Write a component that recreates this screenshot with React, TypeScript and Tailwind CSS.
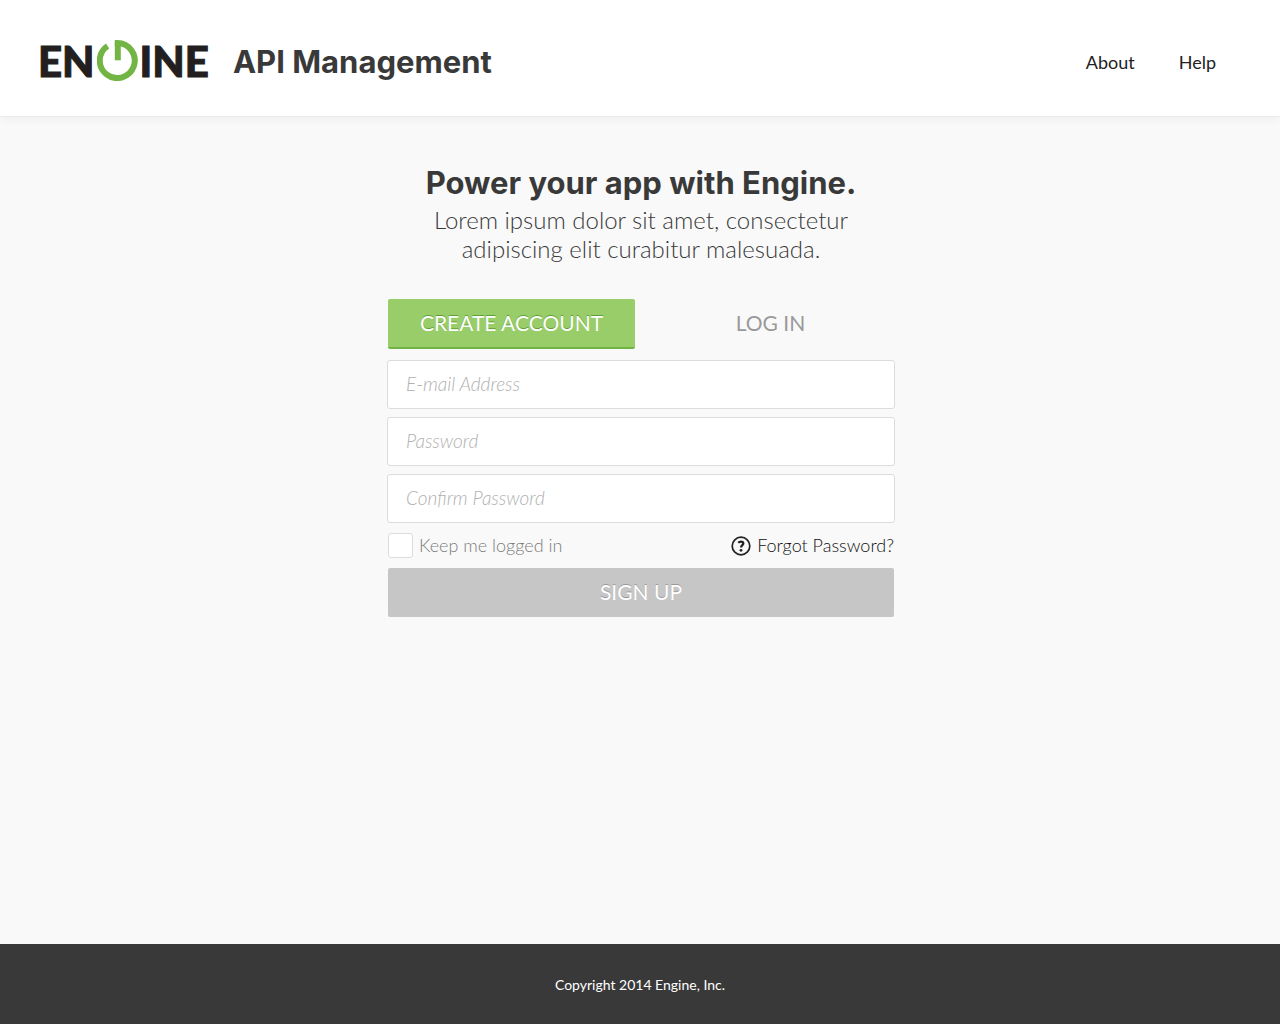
import { useState } from "react";

function Logo() {
  return (
    <a
      href="#home"
      aria-label="Engine home"
      className="flex h-[41px] items-center gap-0.5 font-['Lato',sans-serif] text-[42px] leading-[41px] font-black text-[#231f20] [-webkit-text-stroke:1px_#231f20]"
    >
      <span className="pt-0.5">EN</span>
      <svg viewBox="0 0 41 41" className="h-[41px] w-[41px]" aria-hidden="true">
        <path d="M17.8 3H20.4A17.5 17.5 0 1 1 10.6 5.9" fill="none" stroke="#72b544" strokeWidth="6" />
        <path d="M17.8 2H23.8V20.3H17.8Z" fill="#72b544" />
      </svg>
      <span className="pt-0.5">INE</span>
    </a>
  );
}

function HelpIcon() {
  return (
    <svg viewBox="0 0 20 20" className="size-5" fill="none" stroke="#222" aria-hidden="true">
      <circle cx="10" cy="10" r="8.8" strokeWidth="1.7" />
      <path d="M7.2 6.8C8 6 8.9 5.6 10 5.6C11.5 5.6 12.3 6.4 12.3 7.5C12.3 9.2 10.1 9.3 10.1 11.6" strokeWidth="2.3" />
      <circle cx="10" cy="14.3" r="1.4" fill="#222" stroke="none" />
    </svg>
  );
}

const fields = [
  { id: "email", label: "E-mail Address", type: "email" },
  { id: "password", label: "Password", type: "password" },
  { id: "confirm", label: "Confirm Password", type: "password" },
];

const tabBase = "h-[50px] flex-1 rounded-[2px] text-[21px] leading-6 cursor-pointer";
const tabActive =
  "bg-[#99cd69] border-b-2 border-[#72b544] text-white font-normal [text-shadow:0_-1px_0_#5f9f37]";
const tabIdle = "border-b-2 border-transparent text-[#999] font-normal";

export default function App() {
  const [tab, setTab] = useState("create");
  return (
    <div className="flex min-h-screen flex-col bg-[#f9f9f9] font-['Lato',sans-serif] text-[#393939]">
      <header className="flex items-center justify-between border-b border-[#ececec] bg-white pt-10 pr-10 pb-[35px] pl-[38px] shadow-[0_2px_10px_rgba(0,0,0,0.05)]">
        <div className="flex items-center gap-6">
          <Logo />
          <span className="pt-0.5 font-['Inter',sans-serif] text-[31px] leading-[39px] font-bold">
            API Management
          </span>
        </div>
        <nav className="flex gap-11 pt-0.5 pr-6 text-[18px] leading-6 text-[#222]">
          <a href="#about">About</a>
          <a href="#help">Help</a>
        </nav>
      </header>

      <main className="flex flex-1 flex-col items-center pt-[46px] pl-0.5">
        <h1 className="text-center font-['Inter',sans-serif] text-[31px] leading-10 font-bold">
          Power your app with Engine.
        </h1>
        <p className="max-w-[460px] pt-0.5 text-center text-[24px] leading-[29px] font-light">
          Lorem ipsum dolor sit amet, consectetur adipiscing elit curabitur malesuada.
        </p>

        <form className="w-full max-w-[508px] pt-9" onSubmit={(e) => e.preventDefault()}>
          <div className="flex gap-3 px-px">
            <button
              type="button"
              aria-pressed={tab === "create"}
              onClick={() => setTab("create")}
              className={`${tabBase} ${tab === "create" ? tabActive : tabIdle}`}
            >
              CREATE ACCOUNT
            </button>
            <button
              type="button"
              aria-pressed={tab === "login"}
              onClick={() => setTab("login")}
              className={`${tabBase} ${tab === "login" ? tabActive : tabIdle}`}
            >
              LOG IN
            </button>
          </div>

          <div className="flex flex-col gap-2 pt-[11px]">
            {fields.map((f) => (
              <input
                key={f.id}
                id={f.id}
                type={f.type}
                aria-label={f.label}
                placeholder={f.label}
                className="h-[49px] w-full rounded-[3px] border border-[#dcdcdc] bg-white px-[18px] pb-0.5 text-[19px] font-light outline-none placeholder:text-[#b0b0b0] placeholder:italic focus:border-[#99cd69]"
              />
            ))}
          </div>

          <div className="flex items-center justify-between px-px py-2.5 text-[18px] leading-[25px] font-light">
            <label className="flex items-center gap-1.5 text-[#7c7c7c]">
              <input
                type="checkbox"
                className="size-[25px] appearance-none rounded-[3px] border border-[#dcdcdc] bg-white checked:bg-[#99cd69]"
              />
              Keep me logged in
            </label>
            <a href="#forgot" className="flex items-center gap-1.5 text-[#111]">
              <HelpIcon />
              Forgot Password?
            </a>
          </div>

          <div className="px-px">
            <button
              type="submit"
              className="h-[49px] w-full cursor-pointer rounded-[2px] bg-[#c6c6c6] pb-0.5 text-[21px] leading-6 text-white [text-shadow:0_-1px_0_#999]"
            >
              SIGN UP
            </button>
          </div>
        </form>
      </main>

      <footer className="bg-[#393939] pt-[31px] pb-[29px] text-center text-[14px] leading-5 text-white">
        Copyright 2014 Engine, Inc.
      </footer>
    </div>
  );
}
